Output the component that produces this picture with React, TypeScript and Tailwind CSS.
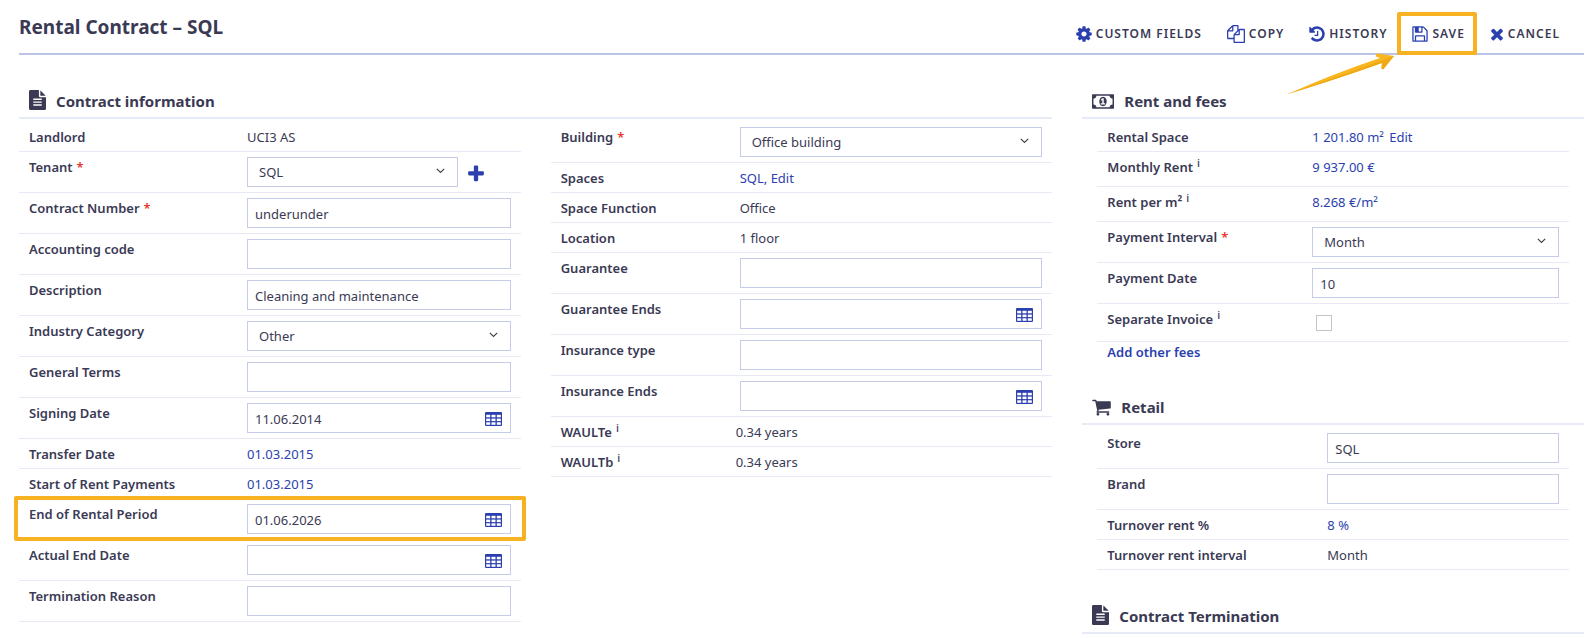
import type { ReactNode } from 'react'
import clsx from 'clsx'

const ICONS = {
  cog: 'M1152 896q0-106-75-181t-181-75-181 75-75 181 75 181 181 75 181-75 75-181zm512-109v222q0 12-8 23t-20 13l-185 28q-19 54-39 91 35 50 107 138 10 12 10 25t-9 23q-27 37-99 108t-94 71q-12 0-26-9l-138-108q-44 23-91 38-16 136-29 186-7 28-36 28h-222q-14 0-24.5-8.5t-11.5-21.5l-28-184q-49-16-90-37l-141 107q-10 9-25 9-14 0-25-11-126-114-165-168-7-10-7-23 0-12 8-23 15-21 51-66.5t54-70.5q-27-50-41-99l-183-27q-13-2-21-12.5t-8-23.5v-222q0-12 8-23t19-13l186-28q14-46 39-92-40-57-107-138-10-12-10-24 0-10 9-23 26-36 98.5-107.5t94.5-71.5q13 0 26 10l138 107q44-23 91-38 16-136 29-186 7-28 36-28h222q14 0 24.5 8.5t11.5 21.5l28 184q49 16 90 37l142-107q9-9 24-9 13 0 25 10 129 119 165 170 7 8 7 22 0 12-8 23-15 21-51 66.5t-54 70.5q26 50 41 98l183 28q13 2 21 12.5t8 23.5z',
  copy: 'M1696 384q40 0 68 28t28 68v1216q0 40-28 68t-68 28h-960q-40 0-68-28t-28-68v-288h-544q-40 0-68-28t-28-68v-672q0-40 20-88t48-76l408-408q28-28 76-48t88-20h416q40 0 68 28t28 68v328q68-40 128-40h416zm-544 213l-299 299h299v-299zm-640-384l-299 299h299v-299zm196 647l316-316v-416h-384v416q0 40-28 68t-68 28h-416v640h512v-256q0-40 20-88t48-76zm956 804v-1152h-384v416q0 40-28 68t-68 28h-416v640h896z',
  history: 'M1664 896q0 156-61 298t-164 245-245 164-298 61q-172 0-327-72.5t-264-204.5q-7-10-6.5-22.5t8.5-20.5l137-138q10-9 25-9 16 2 23 12 73 95 179 147t225 52q104 0 198.5-40.5t163.5-109.5 109.5-163.5 40.5-198.5-40.5-198.5-109.5-163.5-163.5-109.5-198.5-40.5q-98 0-188 35.5t-160 101.5l137 138q31 30 14 69-17 40-59 40h-448q-26 0-45-19t-19-45v-448q0-42 40-59 39-17 69 14l130 129q107-101 244.5-156.5t284.5-55.5q156 0 298 61t245 164 164 245 61 298zm-640-288v448q0 14-9 23t-23 9h-320q-14 0-23-9t-9-23v-64q0-14 9-23t23-9h224v-352q0-14 9-23t23-9h64q14 0 23 9t9 23z',
  save: 'M512 1536h768v-384h-768v384zm896 0h128v-896q0-14-10-38.5t-20-34.5l-281-281q-10-10-34-20t-39-10v416q0 40-28 68t-68 28h-576q-40 0-68-28t-28-68v-416h-128v1280h128v-416q0-40 28-68t68-28h832q40 0 68 28t28 68v416zm-384-928v-320q0-13-9.5-22.5t-22.5-9.5h-192q-13 0-22.5 9.5t-9.5 22.5v320q0 13 9.5 22.5t22.5 9.5h192q13 0 22.5-9.5t9.5-22.5zm640 32v928q0 40-28 68t-68 28h-1344q-40 0-68-28t-28-68v-1344q0-40 28-68t68-28h928q40 0 88 20t76 48l280 280q28 28 48 76t20 88z',
  cancel: 'M1490 1322q0 40-28 68l-136 136q-28 28-68 28t-68-28l-294-294-294 294q-28 28-68 28t-68-28l-136-136q-28-28-28-68t28-68l294-294-294-294q-28-28-28-68t28-68l136-136q28-28 68-28t68 28l294 294 294-294q28-28 68-28t68 28l136 136q28 28 28 68t-28 68l-294 294 294 294q28 28 28 68z',
  plus: 'M1600 736v192q0 40-28 68t-68 28h-416v416q0 40-28 68t-68 28h-192q-40 0-68-28t-28-68v-416h-416q-40 0-68-28t-28-68v-192q0-40 28-68t68-28h416v-416q0-40 28-68t68-28h192q40 0 68 28t28 68v416h416q40 0 68 28t28 68z',
  file: 'M1596 476q14 14 28 36h-472v-472q22 14 36 28zm-476 164h544v1056q0 40-28 68t-68 28h-1344q-40 0-68-28t-28-68v-1600q0-40 28-68t68-28h800v544q0 40 28 68t68 28zm160 736v-64q0-14-9-23t-23-9h-704q-14 0-23 9t-9 23v64q0 14 9 23t23 9h704q14 0 23-9t9-23zm0-256v-64q0-14-9-23t-23-9h-704q-14 0-23 9t-9 23v64q0 14 9 23t23 9h704q14 0 23-9t9-23zm0-256v-64q0-14-9-23t-23-9h-704q-14 0-23 9t-9 23v64q0 14 9 23t23 9h704q14 0 23-9t9-23z',
  money: 'M768 1152h384v-96h-128v-448h-114l-148 137 77 80q42-37 55-57h2v288h-128v96zm512-256q0 70-21 142t-59.5 134-101.5 101-138 39-138-39-101.5-101-59.5-134-21-142 21-142 59.5-134 101.5-101 138-39 138 39 101.5 101 59.5 134 21 142zm512 256v-512q-106 0-181-75t-75-181h-1152q0 106-75 181t-181 75v512q106 0 181 75t75 181h1152q0-106 75-181t181-75zm128-832v1152q0 26-19 45t-45 19h-1792q-26 0-45-19t-19-45v-1152q0-26 19-45t45-19h1792q26 0 45 19t19 45z',
  cart: 'M704 1536q0 52-38 90t-90 38-90-38-38-90 38-90 90-38 90 38 38 90zm896 0q0 52-38 90t-90 38-90-38-38-90 38-90 90-38 90 38 38 90zm128-1088v512q0 24-16.5 42.5t-40.5 21.5l-1044 122q13 60 13 70 0 16-24 64h920q26 0 45 19t19 45-19 45-45 19h-1024q-26 0-45-19t-19-45q0-11 8-31.5t16-36 21.5-40 15.5-29.5l-177-823h-204q-26 0-45-19t-19-45 19-45 45-19h256q16 0 28.5 6.5t19.5 15.5 13 24.5 8 26 5.5 29.5 4.5 26h1201q26 0 45 19t19 45z',
}

// viewBoxes are cut to the width of each glyph
const VIEW_BOXES: Record<keyof typeof ICONS, string> = {
  cog: '128 0 1536 1792',
  copy: '0 0 1792 1792',
  history: '128 0 1536 1792',
  save: '128 0 1536 1792',
  cancel: '192 0 1408 1792',
  plus: '192 0 1408 1792',
  file: '128 0 1536 1792',
  money: '0 256 1920 1280',
  cart: '64 0 1664 1792',
}

function Icon({ name, className }: { name: keyof typeof ICONS; className: string }) {
  return (
    <svg viewBox={VIEW_BOXES[name]} fill="currentColor" aria-hidden="true" className={clsx('shrink-0', className)}>
      <path fillRule="evenodd" d={ICONS[name]} />
    </svg>
  )
}

function CalendarIcon() {
  return (
    <svg viewBox="0 0 17 14" aria-hidden="true" className="h-[14px] w-[17px]">
      <rect width="17" height="14" rx="1" fill="#2b3faf" />
      <g fill="#fff">
        {[2.8, 6.6, 10.3].map((y) =>
          [1.2, 6.5, 11.8].map((x) => <rect key={`${x}-${y}`} x={x} y={y} width="4" height="2.5" />)
        )}
      </g>
    </svg>
  )
}

interface RowProps {
  label: string
  labelWidth: string
  id?: string
  required?: boolean
  info?: boolean
  highlight?: boolean
  className?: string
  children: ReactNode
}

function Row({ label, labelWidth, id, required, info, highlight, className, children }: RowProps) {
  const content = (
    <>
      {label}
      {required && <span className="ml-1 text-[#e5382b]">*</span>}
      {info && <sup className="ml-1 text-[11px] font-medium">i</sup>}
    </>
  )
  const labelClass = clsx('h-5 shrink-0 font-semibold whitespace-nowrap', labelWidth)
  return (
    <div className={clsx('relative flex items-start border-b border-[#e8e9f5] pt-[5px] pr-[10px] pl-[10px]', className)}>
      {id ? (
        <label htmlFor={id} className={labelClass}>{content}</label>
      ) : (
        <span className={labelClass}>{content}</span>
      )}
      <div className="min-w-0 flex-1">{children}</div>
      {highlight && (
        <div className="pointer-events-none absolute -inset-x-[5px] -top-[3px] -bottom-[2px] rounded-xs border-4 border-[#f6b221]" />
      )}
    </div>
  )
}

function TextRow(props: RowProps) {
  return <Row {...props} className={clsx('pb-1', props.className)} />
}

function FieldRow(props: RowProps) {
  return <Row {...props} className="pb-[5px]" />
}

function TextInput({ id, value = '' }: { id: string; value?: string }) {
  return (
    <input
      id={id}
      type="text"
      defaultValue={value}
      className="block h-[30px] w-full border border-[#c6cbe8] bg-white px-[7px] pt-px outline-none"
    />
  )
}

function DateInput({ id, value }: { id: string; value?: string }) {
  return (
    <div className="relative">
      <TextInput id={id} value={value} />
      <button type="button" aria-label="Open calendar" className="absolute top-[9px] right-[9px]">
        <CalendarIcon />
      </button>
    </div>
  )
}

function Select({ id, value }: { id: string; value: string }) {
  return (
    <div className="relative">
      <select
        id={id}
        defaultValue={value}
        className="block h-[30px] w-full appearance-none border border-[#c6cbe8] bg-white px-[11px] outline-none"
      >
        <option>{value}</option>
      </select>
      <svg viewBox="0 0 9 6" aria-hidden="true" className="pointer-events-none absolute top-[11px] right-[13px] h-[6px] w-[9px]">
        <path d="M.8.8l3.700 3.700L8.200.8" fill="none" stroke="#444" strokeWidth="1.200" />
      </svg>
    </div>
  )
}

function Link({ children, className }: { children: ReactNode; className?: string }) {
  return <a href="#" className={clsx('text-[#2b3faf]', className)}>{children}</a>
}

function SectionHeader({ icon, title, className }: { icon: ReactNode; title: string; className?: string }) {
  return (
    <div className={clsx('mb-[3px] flex h-[38px] items-end gap-[10px] border-b-2 border-[#e7eaf7] pb-[6px] pl-[10px]', className)}>
      {icon}
      <h2 className="text-[15px] leading-5 font-bold">{title}</h2>
    </div>
  )
}

function Action({ icon, iconClass, label, highlight }: { icon: keyof typeof ICONS; iconClass: string; label: string; highlight?: boolean }) {
  return (
    <button type="button" className="relative flex h-5 items-center gap-1 text-[12px] font-semibold tracking-[1px] uppercase">
      <Icon name={icon} className={clsx('text-[#2b3faf]', iconClass)} />
      {label}
      {highlight && (
        <>
          <span className="pointer-events-none absolute -top-3 -right-3 -bottom-[11px] -left-[15px] rounded-xs border-4 border-[#f6b221]" />
          <svg viewBox="0 0 110 44" aria-hidden="true" className="pointer-events-none absolute top-[28px] right-[70px] h-[44px] w-[110px]">
            <path d="M1.500 42.500Q50 21 95 6L91 4.500Q90.500 1 93 1.500L109 4 98.500 17Q96.500 18 96.500 15.500L97 11Q52 27 1.500 42.500z" fill="#f9b61f" />
            <path d="M1.500 42.500Q60 22 109 4L98.500 17Q96.500 18 96.500 15.500L97 11Q52 27 1.500 42.500z" fill="#eda916" />
          </svg>
        </>
      )}
    </button>
  )
}

function ContractInformation() {
  return (
    <section className="col-span-2">
      <SectionHeader icon={<Icon name="file" className="mb-px h-5 w-[17px]" />} title="Contract information" />
      <div className="grid grid-cols-2 gap-[30px]">
        <div>
          <TextRow label="Landlord" labelWidth="w-[218px]">UCI3 AS</TextRow>
          <FieldRow label="Tenant" id="tenant" labelWidth="w-[218px]" required>
            <div className="flex items-center">
              <div className="flex-1">
                <Select id="tenant" value="SQL" />
              </div>
              <button type="button" aria-label="Add tenant" className="w-[53px] pt-[3px] pl-[10px] text-[#2b3faf]">
                <Icon name="plus" className="h-5 w-4" />
              </button>
            </div>
          </FieldRow>
          <FieldRow label="Contract Number" id="contract-number" labelWidth="w-[218px]" required>
            <TextInput id="contract-number" value="underunder" />
          </FieldRow>
          <FieldRow label="Accounting code" id="accounting-code" labelWidth="w-[218px]">
            <TextInput id="accounting-code" />
          </FieldRow>
          <FieldRow label="Description" id="description" labelWidth="w-[218px]">
            <TextInput id="description" value="Cleaning and maintenance" />
          </FieldRow>
          <FieldRow label="Industry Category" id="industry" labelWidth="w-[218px]">
            <Select id="industry" value="Other" />
          </FieldRow>
          <FieldRow label="General Terms" id="general-terms" labelWidth="w-[218px]">
            <TextInput id="general-terms" />
          </FieldRow>
          <FieldRow label="Signing Date" id="signing-date" labelWidth="w-[218px]">
            <DateInput id="signing-date" value="11.06.2014" />
          </FieldRow>
          <TextRow label="Transfer Date" labelWidth="w-[218px]">
            <Link>01.03.2015</Link>
          </TextRow>
          <TextRow label="Start of Rent Payments" labelWidth="w-[218px]">
            <Link>01.03.2015</Link>
          </TextRow>
          <FieldRow label="End of Rental Period" id="rental-end" labelWidth="w-[218px]" highlight>
            <DateInput id="rental-end" value="01.06.2026" />
          </FieldRow>
          <FieldRow label="Actual End Date" id="actual-end" labelWidth="w-[218px]">
            <DateInput id="actual-end" />
          </FieldRow>
          <FieldRow label="Termination Reason" id="termination-reason" labelWidth="w-[218px]">
            <TextInput id="termination-reason" />
          </FieldRow>
        </div>
        <div>
          <FieldRow label="Building" id="building" labelWidth="w-[179px]" required>
            <Select id="building" value="Office building" />
          </FieldRow>
          <TextRow label="Spaces" labelWidth="w-[179px]">
            <Link>SQL,</Link> <Link>Edit</Link>
          </TextRow>
          <TextRow label="Space Function" labelWidth="w-[179px]">Office</TextRow>
          <TextRow label="Location" labelWidth="w-[179px]">1 floor</TextRow>
          <FieldRow label="Guarantee" id="guarantee" labelWidth="w-[179px]">
            <TextInput id="guarantee" />
          </FieldRow>
          <FieldRow label="Guarantee Ends" id="guarantee-ends" labelWidth="w-[179px]">
            <DateInput id="guarantee-ends" />
          </FieldRow>
          <FieldRow label="Insurance type" id="insurance-type" labelWidth="w-[179px]">
            <TextInput id="insurance-type" />
          </FieldRow>
          <FieldRow label="Insurance Ends" id="insurance-ends" labelWidth="w-[179px]">
            <DateInput id="insurance-ends" />
          </FieldRow>
          <TextRow label="WAULTe" labelWidth="w-[175px]" info>0.34 years</TextRow>
          <TextRow label="WAULTb" labelWidth="w-[175px]" info>0.34 years</TextRow>
        </div>
      </div>
    </section>
  )
}

function SideSections() {
  return (
    <div>
      <section>
        <SectionHeader icon={<Icon name="money" className="mb-[2px] h-[15px] w-[22px]" />} title="Rent and fees" />
        <div className="mx-[15px]">
          <TextRow label="Rental Space" labelWidth="w-[205px]">
            <Link className="mr-[2px]">1 201.80 m²</Link> <Link>Edit</Link>
          </TextRow>
          <TextRow label="Monthly Rent" labelWidth="w-[205px]" className="h-[35px]" info>
            <Link>9 937.00 €</Link>
          </TextRow>
          <TextRow label="Rent per m²" labelWidth="w-[205px]" className="h-[35px]" info>
            <Link>8.268 €/m²</Link>
          </TextRow>
          <FieldRow label="Payment Interval" id="payment-interval" labelWidth="w-[205px]" required>
            <Select id="payment-interval" value="Month" />
          </FieldRow>
          <FieldRow label="Payment Date" id="payment-date" labelWidth="w-[205px]">
            <TextInput id="payment-date" value="10" />
          </FieldRow>
          <TextRow label="Separate Invoice" id="separate-invoice" labelWidth="w-[205px]" className="h-[38px]" info>
            <input
              id="separate-invoice"
              type="checkbox"
              className="mt-[6px] ml-1 block size-4 appearance-none border border-[#c4c4c4] bg-white checked:bg-[#2b3faf]"
            />
          </TextRow>
          <div className="pl-[10px] leading-[21px]">
            <Link className="font-semibold">Add other fees</Link>
          </div>
        </div>
      </section>

      <section className="mt-6">
        <SectionHeader icon={<Icon name="cart" className="h-5 w-[19px]" />} title="Retail" />
        <div className="mx-[15px]">
          <FieldRow label="Store" id="store" labelWidth="w-[220px]">
            <TextInput id="store" value="SQL" />
          </FieldRow>
          <FieldRow label="Brand" id="brand" labelWidth="w-[220px]">
            <TextInput id="brand" />
          </FieldRow>
          <TextRow label="Turnover rent %" labelWidth="w-[220px]">
            <Link>8 %</Link>
          </TextRow>
          <TextRow label="Turnover rent interval" labelWidth="w-[220px]">Month</TextRow>
        </div>
      </section>

      <section className="mt-[26px]">
        <SectionHeader icon={<Icon name="file" className="mb-px h-5 w-[17px]" />} title="Contract Termination" />
      </section>
    </div>
  )
}

export default function App() {
  return (
    <main className="bg-white pr-3 pl-[19px] font-['Noto_Sans','Open_Sans',sans-serif] text-[13px] leading-5 text-[#3a3a55]">
      <header className="flex h-[55px] items-start justify-between border-b-2 border-[#bcc4e6]">
        <h1 className="pt-[15px] text-[19px] leading-6 font-bold">Rental Contract – SQL</h1>
        <div className="flex gap-[25px] pt-6 pr-6">
          <Action icon="cog" iconClass="h-[18px] w-4" label="Custom fields" />
          <Action icon="copy" iconClass="size-[18px]" label="Copy" />
          <Action icon="history" iconClass="h-[18px] w-4" label="History" />
          <Action icon="save" iconClass="h-[18px] w-4" label="Save" highlight />
          <Action icon="cancel" iconClass="h-[18px] w-[14px]" label="Cancel" />
        </div>
      </header>
      <form className="mt-[26px] grid grid-cols-3 gap-[30px]">
        <ContractInformation />
        <SideSections />
      </form>
    </main>
  )
}
